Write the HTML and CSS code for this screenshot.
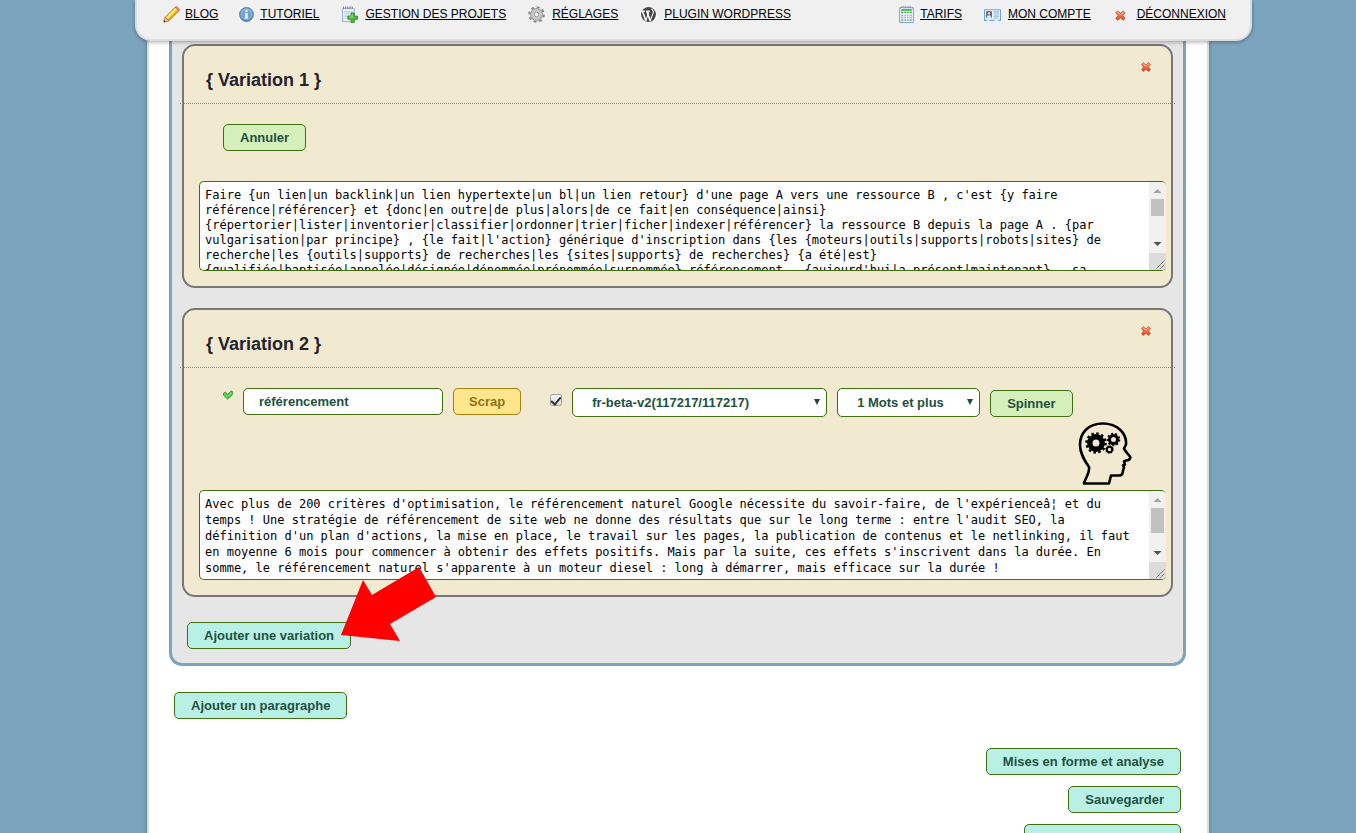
FILE: index.html
```html
<!DOCTYPE html>
<html lang="fr">
<head>
<meta charset="utf-8">
<title>Variations</title>
<link rel="stylesheet" href="styles.css">
</head>
<body>
<svg class="defs" aria-hidden="true">
  <defs>
    <linearGradient id="red" x1="0" y1="0" x2="0" y2="1"><stop offset="0" stop-color="#ff9a78"/><stop offset="1" stop-color="#ee3d1c"/></linearGradient>
    <linearGradient id="steel" x1="0" y1="0" x2="0" y2="1"><stop offset="0" stop-color="#8fb4dc"/><stop offset="1" stop-color="#4a7fc0"/></linearGradient>
    <symbol id="cross" viewBox="0 0 10 10"><path d="M2.400.6 5 3 7.600.6 9.400 2.400 7.100 5 9.400 7.600 7.600 9.400 5 7.100 2.400 9.400.6 7.600 2.900 5 .6 2.400Z" fill="url(#red)" stroke="#d8452a" stroke-width=".8" stroke-linejoin="round"/><path d="M2.400 1.800 5 4.200l2.600-2.400" fill="none" stroke="#ffc2ab" stroke-width=".7"/></symbol>
    <symbol id="scroll" viewBox="0 0 17 88">
      <path fill="#f1f1f1" d="M0 0h17v88H0z"/><path fill="#dcdcdc" d="M0 71h17v17H0z"/>
      <path fill="#a3a3a3" d="M4.500 11h8l-4-4z"/><path fill="#505050" d="M4.500 60h8l-4 4z"/>
      <path stroke="#555" d="m7.500 86.500 8-8m-4 8 4-4" fill="none" stroke-dasharray="1.400 .6"/>
    </symbol>
  </defs>
</svg>
<div class="wrap">
  <header class="topbar">
    <nav class="menu">
      <a href="#"><svg class="icon" viewBox="0 0 16 16"><path d="M2 10.500 11.500 1l3.500 3.500L5.500 14z" fill="#f8ce37" stroke="#a9791c" stroke-width=".8"/><path d="m3.500 11.500 9.500-9.500" stroke="#fff19a" stroke-width="1.200"/><path d="m5 13 9.500-9" stroke="#d9981c" stroke-width="1"/><path d="M11.500 1 13 .4 15.600 3 15 4.500z" fill="#ef8f78" stroke="#b35c48" stroke-width=".6"/><path d="M2 10.500.8 15.200 5.500 14z" fill="#f0d0a0" stroke="#a8543d" stroke-width=".7"/><path d="m.7 15.400.5-2 1.500 1.500z" fill="#333"/></svg><span>BLOG</span></a>
      <a href="#"><svg class="icon" viewBox="0 0 16 16"><path fill="#f8fafc" d="M1 1h14v14H1z"/><circle cx="8" cy="8" r="6.500" fill="url(#steel)" stroke="#5c87b8"/><circle cx="8" cy="8" r="4.700" fill="#6f9fd3" stroke="#a9c8e8" stroke-width=".7"/><path fill="#fff" d="M7 4h2v1.600H7zM6.500 6.700H9v4h.7v1H6.400v-1H7V7.700h-.5z"/></svg><span>TUTORIEL</span></a>
      <a href="#"><svg class="icon wide" viewBox="0 0 16 16"><path fill="#f4f9fd" stroke="#8fb3d5" d="M1.500 2.500h11v12h-11z"/><path stroke="#777" stroke-dasharray="1 1" d="M2 1.500h10" stroke-width="2"/><path stroke="#b4c6d8" d="M3 5.500h8m-8 2h8m-8 2h5m-5 2h4"/><path fill="#4cbb3a" stroke="#2b8f22" stroke-width=".8" d="M9.500 6.500h3v3h3v3h-3v3h-3v-3h-3v-3h3z"/><path stroke="#a4e590" d="M10.500 8v2.500H8" fill="none"/></svg><span>GESTION DES PROJETS</span></a>
      <a href="#"><svg class="icon wide" viewBox="0 0 16 16"><circle cx="8" cy="8" r="6.500" fill="none" stroke="#8b8b8b" stroke-width="2.600" stroke-dasharray="2.600 2.500"/><circle cx="8" cy="8" r="4.600" fill="#d7d7d7" stroke="#c3c3c3" stroke-width="3"/><circle cx="8" cy="8" r="5.700" fill="none" stroke="#979797" stroke-width=".7"/><circle cx="8" cy="8" r="2.200" fill="#f0f0f0" stroke="#8a8a8a" stroke-width=".8"/></svg><span>RÉGLAGES</span></a>
      <a href="#"><svg class="icon wide" viewBox="0 0 16 16"><circle cx="8" cy="8" r="8" fill="#fff"/><circle cx="8" cy="8" r="7" fill="#464646"/><path fill="none" stroke="#fff" stroke-width="1.500" d="m2.300 5 3.300 9M6.300 5l3.400 9"/><path fill="none" stroke="#fff" stroke-width="1" d="m5.400 14 3-8.500M9.500 14l3.100-8c.5-1.700-1.700-2-1.500-3.500M1.700 4.800h3m1 0h3.600"/></svg><span>PLUGIN WORDPRESS</span></a>
    </nav>
    <nav class="menu">
      <a href="#"><svg class="icon" viewBox="0 0 16 16"><rect x="1.500" y="1.500" width="13" height="14" rx="1" fill="#eef5fb" stroke="#7da6cf"/><path stroke="#8b9aa8" stroke-dasharray="1 1" d="M3 .5h10"/><path fill="#3fb13b" d="M3 3h10v4H3z"/><path fill="#9aa9b7" d="M3 8h10v6H3z"/><path stroke="#f7fbff" stroke-width=".8" d="M3 7.500h10M3 9.700h10M3 11.900h10M5.500 5v9M8 5v9m2.500-9v9M3 5h10"/></svg><span>TARIFS</span></a>
      <a href="#"><svg class="icon wide" viewBox="0 0 16 16"><path fill="#eaf4fd" stroke="#70a5d8" d="M.5 3.500h15v10H.5z"/><path stroke="#fff" d="M3 13.500h2m5 0h3" stroke-width="1.400"/><path fill="#3e79b9" d="M2 5h5.500v6H2z"/><circle cx="4.700" cy="7" r="1.700" fill="#f9d0a0" stroke="#5b3b25" stroke-width=".7"/><path fill="#fff" d="M3 11c0-3 3.500-3 3.500 0z"/><path stroke="#8db5da" d="M9 5.500h5m-5 2h5m-5 2h5m-5 2h4"/></svg><span>MON COMPTE</span></a>
      <a href="#"><svg class="icon wide" viewBox="0 0 16 16"><use href="#cross" x="2" y="4" width="10" height="10"/></svg><span>DÉCONNEXION</span></a>
    </nav>
  </header>

  <main class="sheet">
    <section class="paragraph">
      <article class="card">
        <header class="card-head">
          <h2>{ Variation 1 }</h2>
          <button class="delete" type="button" aria-label="Supprimer la variation 1"><svg viewBox="0 0 10 10"><use href="#cross"/></svg></button>
        </header>
        <div class="controls controls-start">
          <button class="btn green" type="button">Annuler</button>
        </div>
        <div class="editor">
          <textarea wrap="off" aria-label="Texte de la variation 1">Faire {un lien|un backlink|un lien hypertexte|un bl|un lien retour} d'une page A vers une ressource B , c'est {y faire
référence|référencer} et {donc|en outre|de plus|alors|de ce fait|en conséquence|ainsi}
{répertorier|lister|inventorier|classifier|ordonner|trier|ficher|indexer|référencer} la ressource B depuis la page A . {par
vulgarisation|par principe} , {le fait|l'action} générique d'inscription dans {les {moteurs|outils|supports|robots|sites} de
recherche|les {outils|supports} de recherches|les {sites|supports} de recherches} {a été|est}
{qualifiée|baptisée|appelée|désignée|dénommée|prénommée|surnommée} référencement . {aujourd'hui|a présent|maintenant} , sa</textarea>
          <svg class="scrollbar" viewBox="0 0 17 88" aria-hidden="true"><use href="#scroll"/><path fill="#c1c1c1" d="M2 17h13v17H2z"/></svg>
        </div>
      </article>

      <article class="card">
        <header class="card-head">
          <h2>{ Variation 2 }</h2>
          <button class="delete" type="button" aria-label="Supprimer la variation 2"><svg viewBox="0 0 10 10"><use href="#cross"/></svg></button>
        </header>
        <div class="controls">
          <div class="fields">
            <svg class="tick" viewBox="0 0 10 10" aria-hidden="true"><path d="M.5 3.200 2.200 2l2.400 2.400L8.200.8l1.400 1v2.400L4.600 9.200.5 5.200z" fill="#4dc84d" stroke="#2c8a2c" stroke-width=".8"/><path d="m1.300 3.800 3.200 3 4.400-4.400" fill="none" stroke="#a5eda0" stroke-width=".8"/></svg>
            <input class="keyword" type="text" value="référencement" aria-label="Mot-clé">
            <button class="btn yellow" type="button">Scrap</button>
            <input class="check" type="checkbox" checked aria-label="Utiliser le dictionnaire">
            <span class="select dictionary"><select aria-label="Dictionnaire"><option>fr-beta-v2(117217/117217)</option></select><svg viewBox="0 0 6 6" aria-hidden="true"><path d="M0 0h6L3 6z"/></svg></span>
            <span class="select words"><select aria-label="Nombre de mots"><option>1 Mots et plus</option></select><svg viewBox="0 0 6 6" aria-hidden="true"><path d="M0 0h6L3 6z"/></svg></span>
            <button class="btn green" type="button">Spinner</button>
          </div>
          <svg class="brain" viewBox="0 0 54 63" aria-hidden="true">
            <path d="M6 61.500h25l2-8h8c3 0 4-2 4-5l1-3-1-2 2-1-1-3 2-1c3 0 5-2 4-4-2-3-5-5-6-8l2-4C49 11 39 1.500 25 1.500 10 1.500 2 11 2 23c0 9 5 16 9 22 1 6-3 10-5 16z" fill="none" stroke="#000" stroke-width="2.600" stroke-linejoin="round"/>
            <circle cx="18" cy="21" r="9.500" fill="none" stroke="#000" stroke-width="2.500" stroke-dasharray="2.500 2.474"/><circle cx="18" cy="21" r="6.200" fill="none" stroke="#000" stroke-width="5.400"/>
            <circle cx="35.500" cy="17.500" r="5.800" fill="none" stroke="#000" stroke-width="2" stroke-dasharray="2 2.050"/><circle cx="35.500" cy="17.500" r="4" fill="none" stroke="#000" stroke-width="3"/>
            <circle cx="31.500" cy="27.500" r="2.700" fill="none" stroke="#000" stroke-width="2"/><circle cx="31.500" cy="27.500" r="3.800" fill="none" stroke="#000" stroke-width="1" stroke-dasharray="1.500 1.480"/>
          </svg>
        </div>
        <div class="editor">
          <textarea class="loose" wrap="off" aria-label="Texte de la variation 2">Avec plus de 200 critères d'optimisation, le référencement naturel Google nécessite du savoir-faire, de l'expérienceâ¦ et du
temps ! Une stratégie de référencement de site web ne donne des résultats que sur le long terme : entre l'audit SEO, la
définition d'un plan d'actions, la mise en place, le travail sur les pages, la publication de contenus et le netlinking, il faut
en moyenne 6 mois pour commencer à obtenir des effets positifs. Mais par la suite, ces effets s'inscrivent dans la durée. En
somme, le référencement naturel s'apparente à un moteur diesel : long à démarrer, mais efficace sur la durée !</textarea>
          <svg class="scrollbar" viewBox="0 0 17 88" aria-hidden="true"><use href="#scroll"/><path fill="#c1c1c1" d="M2 17h13v25H2z"/></svg>
        </div>
      </article>

      <div class="add-variation">
        <button class="btn aqua" type="button">Ajouter une variation</button>
        <svg class="arrow" viewBox="0 0 95 74" aria-hidden="true"><path fill="red" d="m0 68 22-55 9 15L78 0l17 30-46 27 10 17z"/></svg>
      </div>
    </section>

    <div class="add-paragraph"><button class="btn aqua" type="button">Ajouter un paragraphe</button></div>

    <div class="actions">
      <button class="btn aqua" type="button">Mises en forme et analyse</button>
      <button class="btn aqua" type="button">Sauvegarder</button>
      <button class="btn aqua" type="button">Supprimer ce projet</button>
    </div>
  </main>
</div>
</body>
</html>
```
FILE: styles.css
```css
* { box-sizing: border-box; }

html { scrollbar-width: none; }

body {
  margin: 0;
  background: #7ba5bf;
  color: #222;
  font-family: Arial, "Liberation Sans", sans-serif;
}

button, input, select, textarea { font: inherit; margin: 0; }

svg { display: block; }

.defs { position: absolute; width: 0; height: 0; }

.wrap {
  max-width: 1062px;
  margin: 0 auto;
}

/* Top menu */
.topbar {
  position: relative;
  z-index: 2;
  display: flex;
  justify-content: space-between;
  height: 41px;
  margin: 0 -43px 0 -12px;
  padding: 6px 24px 0 26px;
  background: #f0f0f0;
  border: solid #dcdcdc;
  border-width: 0 2px 2px;
  border-radius: 0 0 16px 16px;
  box-shadow: 0 1px 4px rgba(0, 0, 0, .35);
}

.menu {
  display: flex;
  align-items: flex-start;
  gap: 20px;
}

.menu a {
  display: flex;
  align-items: flex-start;
  gap: 5px;
  color: #000;
  font-size: 12px;
  line-height: 16px;
  white-space: nowrap;
}

.menu a span { text-decoration: underline; }

.menu .icon { width: 17px; height: 17px; flex: none; }
.menu .icon.wide { width: 21px; }

/* Page sheet */
.sheet {
  padding: 0 21px 40px 20px;
  background: #fff;
  border: solid #dcdcdc;
  border-width: 0 2px;
  box-shadow: 0 0 4px rgba(0, 0, 0, .35);
}

.paragraph {
  padding: 3px 10px 14px;
  background: #e6e6e6;
  border: 3px solid #7ba5bf;
  border-top: 0;
  border-radius: 0 0 13px 13px;
}

.card {
  padding-bottom: 15px;
  margin-bottom: 20px;
  background: #f2ead0;
  border: 2px solid #777;
  border-radius: 13px;
}

.card-head {
  display: flex;
  justify-content: space-between;
  align-items: flex-start;
  height: 58px;
  margin: 0 -4px;
  padding: 16px 24px 0 26px;
  border-bottom: 1px dotted #8b8b80;
}

.card-head h2 {
  margin: 6px 0 0;
  color: #23232d;
  font-size: 18px;
  line-height: 24px;
}

.delete {
  padding: 0;
  background: none;
  border: 0;
}

.delete svg { width: 10px; height: 10px; }

.controls { padding: 20px 39px 5px; }
.controls-start { padding-bottom: 30px; }

.fields {
  display: flex;
  align-items: flex-start;
  gap: 10px;
}

.fields .green { align-self: flex-end; }

.btn {
  height: 27px;
  padding: 0 16px;
  border: 1px solid #3f7010;
  border-radius: 5px;
  color: #23503f;
  font-size: 13px;
  font-weight: bold;
  line-height: 16px;
  white-space: nowrap;
}

.green { background: #d6f0bb; }
.aqua { background: #b9f0e5; }
.yellow { padding: 0 15px; background: #ffe58c; border-color: #a8820c; color: #8f7414; }

.tick { width: 10px; height: 10px; margin-top: 2px; }

.keyword, .select select {
  background: #fff;
  border: 1px solid #3f7010;
  border-radius: 5px;
  color: #23503f;
  font-size: 13px;
  font-weight: bold;
}

.keyword { width: 200px; height: 27px; padding: 0 15px; }

.check {
  appearance: none;
  display: grid;
  place-items: center;
  width: 12px;
  height: 12px;
  margin: 6px 0 0 19px;
  background: linear-gradient(#f2f2f2, #dedede);
  border: 1px solid #a5a5a5;
  border-radius: 2px;
}

.check:checked::before {
  content: "";
  width: 4px;
  height: 8px;
  border: solid #333;
  border-width: 0 2px 2px 0;
  transform: rotate(40deg);
}

.select { position: relative; }
.select select {
  appearance: none;
  display: block;
  width: 100%;
  height: 29px;
  padding: 0 19px;
}
.select svg {
  position: absolute;
  top: 11px;
  right: 7px;
  width: 6px;
  height: 6px;
  fill: #1c4a37;
  pointer-events: none;
}
.dictionary { width: 255px; }
.words { width: 143px; }

.brain {
  width: 54px;
  height: 63px;
  margin: 5px 0 0 auto;
}

/* Spintax editor */
.editor {
  display: flex;
  height: 90px;
  margin: 0 5px 0 15px;
  background: #fff;
  border: 1px solid #3f7010;
  border-right: 0;
  border-radius: 5px;
  overflow: hidden;
}

.editor textarea {
  flex: 1;
  min-width: 0;
  padding: 6px 5px 0;
  border: 0;
  background: none;
  color: #000;
  font-family: "DejaVu Sans Mono", monospace;
  font-size: 12px;
  line-height: 15px;
  resize: none;
  overflow: hidden;
}

.editor .loose { line-height: 16px; padding-top: 5px; }

.scrollbar { width: 17px; height: 88px; flex: none; }

.add-variation {
  position: relative;
  width: max-content;
  margin: 25px 0 0 5px;
}

.arrow {
  position: absolute;
  top: -55px;
  right: -85px;
  width: 95px;
  height: 74px;
}

.add-paragraph { margin: 26px 0 29px 5px; }

.actions {
  display: flex;
  flex-direction: column;
  align-items: flex-end;
  gap: 11px;
  margin-right: 5px;
}

@media (max-width: 1130px) {
  .topbar { margin: 0; }
}
```
